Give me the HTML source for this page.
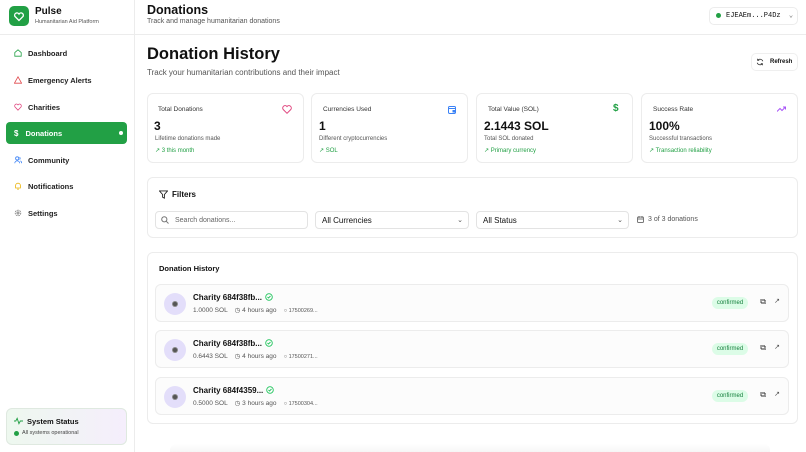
<!DOCTYPE html>
<html><head><meta charset="utf-8"><style>
*{box-sizing:border-box;margin:0;padding:0}
body{width:806px;height:452px;overflow:hidden;font-family:"Liberation Sans",sans-serif;background:#fff;color:#111;position:relative}
.abs{position:absolute}
.side{left:0;top:0;width:135px;height:452px;border-right:1px solid #ececec;background:#fff}
.logo{left:9px;top:6px;width:20px;height:20px;background:#22a045;border-radius:5px}
.nav{left:6px;width:121px;height:22px;font-size:7.5px;font-weight:bold;color:#222;display:flex;align-items:center;padding-left:8px;border-radius:4px}
.nav svg{margin-right:6px}
.card{border:1px solid #ececec;border-radius:6px;background:#fff}
.sm{font-size:6px;color:#555}
.gr{font-size:6px;color:#22a045}
.row{left:155px;width:634px;height:38px;border:1px solid #ececec;border-radius:6px;background:#fcfcfc}
.av{left:8px;top:8px;width:22px;height:22px;border-radius:50%;background:#e3defa}
.av:after{content:"";position:absolute;left:9px;top:9px;width:4px;height:4px;border-radius:50%;background:#555;box-shadow:0 0 0 1px #888}
.badge{right:40px;top:12px;width:36px;height:12px;border-radius:6px;background:#dcfce7;color:#15803d;font-size:6px;text-align:center;line-height:12px}
.sel{border:1px solid #e3e3e3;border-radius:4px;height:18px;font-size:8px;padding-left:6px;line-height:17px;background:#fff}
.ck{display:inline-block;vertical-align:-1px;margin-left:3px}
</style></head><body>
<div class="abs side"></div>
<div class="abs" style="left:0;top:34px;width:806px;border-top:1px solid #ececec"></div>
<div class="abs logo"><svg width="20" height="20" viewBox="0 0 20 20"><path d="M10 14.5l-4-4a2.3 2.3 0 0 1 4-2.5a2.3 2.3 0 0 1 4 2.5z" fill="none" stroke="#fff" stroke-width="1.3"/></svg></div>
<div class="abs" style="left:35px;top:6px;font-size:10px;font-weight:bold">Pulse</div>
<div class="abs" style="left:35px;top:19px;font-size:5.5px;color:#555">Humanitarian Aid Platform</div>

<div class="abs nav" style="top:42px"><svg width="8" height="8" viewBox="0 0 10 10"><path d="M1 4.5L5 1l4 3.5V9H1z" fill="none" stroke="#22a045" stroke-width="1"/></svg>Dashboard</div>
<div class="abs nav" style="top:69px"><svg width="8" height="8" viewBox="0 0 10 10"><path d="M5 1L9.5 9H.5z" fill="none" stroke="#e0474b" stroke-width="1"/></svg>Emergency Alerts</div>
<div class="abs nav" style="top:96px"><svg width="8" height="8" viewBox="0 0 10 10"><path d="M5 9L1.3 5A2.2 2.2 0 0 1 5 2.3A2.2 2.2 0 0 1 8.7 5z" fill="none" stroke="#e0477f" stroke-width="1"/></svg>Charities</div>
<div class="abs nav" style="top:122px;background:#22a045;color:#fff"><span style="margin-right:7px;font-size:8px">$</span>Donations<span class="abs" style="right:4px;top:9px;width:4px;height:4px;border-radius:50%;background:#fff"></span></div>
<div class="abs nav" style="top:149px"><svg width="8" height="8" viewBox="0 0 10 10"><circle cx="4" cy="3" r="2" fill="none" stroke="#3b82f6"/><path d="M1 9a3 3 0 0 1 6 0M7 1.5a2 2 0 0 1 0 3M8 6a3 3 0 0 1 1.5 3" fill="none" stroke="#3b82f6"/></svg>Community</div>
<div class="abs nav" style="top:175px"><svg width="8" height="8" viewBox="0 0 10 10"><path d="M2 7.5V4.5a3 3 0 0 1 6 0v3zM4 9h2" fill="none" stroke="#eab308"/></svg>Notifications</div>
<div class="abs nav" style="top:202px"><svg width="8" height="8" viewBox="0 0 10 10"><circle cx="5" cy="5" r="3.5" fill="none" stroke="#777" stroke-dasharray="2 1"/><circle cx="5" cy="5" r="1.3" fill="none" stroke="#777"/></svg>Settings</div>

<div class="abs" style="left:6px;top:408px;width:121px;height:37px;border:1px solid #dfe9e0;border-radius:6px;background:linear-gradient(90deg,#eef8ef,#f5eefc)"></div>
<svg class="abs" style="left:14px;top:417px" width="9" height="8" viewBox="0 0 10 8"><path d="M0 4h2l1.5-3 2 6 1.5-3H10" fill="none" stroke="#22a045"/></svg>
<div class="abs" style="left:27px;top:417px;font-size:7.5px;font-weight:bold">System Status</div>
<div class="abs" style="left:14px;top:431px;width:5px;height:5px;border-radius:50%;background:#22a045"></div>
<div class="abs" style="left:22px;top:430px;font-size:5.5px;color:#444">All systems operational</div>

<div class="abs" style="left:147px;top:3px;font-size:12.5px;font-weight:bold">Donations</div>
<div class="abs" style="left:147px;top:18px;font-size:7px;color:#555">Track and manage humanitarian donations</div>
<div class="abs" style="left:709px;top:7px;width:89px;height:18px;border:1px solid #ececec;border-radius:5px;font-family:'Liberation Mono',monospace;font-size:7px;line-height:16px;padding-left:16px">EJEAEm...P4Dz <span style="margin-left:4px;color:#666">⌄</span></div>
<div class="abs" style="left:716px;top:13px;width:5px;height:5px;border-radius:50%;background:#22a045"></div>

<div class="abs" style="left:147px;top:45px;font-size:16.5px;font-weight:bold">Donation History</div>
<div class="abs" style="left:147px;top:68px;font-size:8px;color:#555">Track your humanitarian contributions and their impact</div>
<div class="abs" style="left:751px;top:53px;width:47px;height:18px;border:1px solid #efefef;border-radius:5px"></div>
<div class="abs" style="left:770px;top:59px;font-size:6px;font-weight:bold">Refresh</div>
<svg class="abs" style="left:756px;top:58px" width="8" height="8" viewBox="0 0 10 10"><path d="M8.5 4A3.7 3.7 0 0 0 2 3M1.5 6A3.7 3.7 0 0 0 8 7M2 1v2h2M8 9V7H6" fill="none" stroke="#333"/></svg>

<div class="abs card" style="left:147px;top:93px;width:157px;height:70px"></div>
<div class="abs card" style="left:311px;top:93px;width:157px;height:70px"></div>
<div class="abs card" style="left:476px;top:93px;width:157px;height:70px"></div>
<div class="abs card" style="left:641px;top:93px;width:157px;height:70px"></div>
<div class="abs" style="left:158px;top:106px;font-size:6.5px;color:#333">Total Donations</div>
<div class="abs" style="left:154px;top:119px;font-size:12px;font-weight:bold">3</div>
<div class="abs sm" style="left:155px;top:136px">Lifetime donations made</div>
<div class="abs gr" style="left:155px;top:147px">↗ 3 this month</div>
<svg class="abs" style="left:282px;top:105px" width="10" height="9" viewBox="0 0 10 9"><path d="M5 8.3L1.2 4.5A2.2 2.2 0 0 1 5 1.6A2.2 2.2 0 0 1 8.8 4.5z" fill="none" stroke="#e0477f"/></svg>

<div class="abs" style="left:323px;top:106px;font-size:6.5px;color:#333">Currencies Used</div>
<div class="abs" style="left:319px;top:119px;font-size:12px;font-weight:bold">1</div>
<div class="abs sm" style="left:319px;top:136px">Different cryptocurrencies</div>
<div class="abs gr" style="left:319px;top:147px">↗ SOL</div>
<svg class="abs" style="left:448px;top:106px" width="8" height="8" viewBox="0 0 8 8"><rect x=".5" y=".5" width="7" height="7" rx="1.2" fill="none" stroke="#3b82f6"/><path d="M.5 2.5h7M5 4.5h2.5v1.5H5z" stroke="#3b82f6" fill="#3b82f6"/></svg>

<div class="abs" style="left:488px;top:106px;font-size:6.5px;color:#333">Total Value (SOL)</div>
<div class="abs" style="left:484px;top:119px;font-size:12px;font-weight:bold">2.1443 SOL</div>
<div class="abs sm" style="left:484px;top:136px">Total SOL donated</div>
<div class="abs gr" style="left:484px;top:147px">↗ Primary currency</div>
<div class="abs" style="left:613px;top:103px;font-size:10px;color:#22a045;font-weight:bold">$</div>

<div class="abs" style="left:653px;top:106px;font-size:6.5px;color:#333">Success Rate</div>
<div class="abs" style="left:649px;top:119px;font-size:12px;font-weight:bold">100%</div>
<div class="abs sm" style="left:649px;top:136px">Successful transactions</div>
<div class="abs gr" style="left:649px;top:147px">↗ Transaction reliability</div>
<svg class="abs" style="left:777px;top:106px" width="9" height="6" viewBox="0 0 9 6"><path d="M0 5.5l3-3 2 2 3.5-3.5M6 1h2.5v2.5" fill="none" stroke="#a855f7"/></svg>

<div class="abs card" style="left:147px;top:177px;width:651px;height:61px"></div>
<svg class="abs" style="left:159px;top:190px" width="9" height="9" viewBox="0 0 10 10"><path d="M.5 1h9L6 5v4L4 8V5z" fill="none" stroke="#222"/></svg>
<div class="abs" style="left:172px;top:190px;font-size:8px;font-weight:bold">Filters</div>
<div class="abs sel" style="left:155px;top:211px;width:153px;color:#666;font-size:7px;padding-left:19px">Search donations...</div>
<svg class="abs" style="left:161px;top:216px" width="8" height="8" viewBox="0 0 8 8"><circle cx="3.3" cy="3.3" r="2.6" fill="none" stroke="#777"/><path d="M5.3 5.3L7.5 7.5" stroke="#777"/></svg>
<div class="abs sel" style="left:315px;top:211px;width:154px">All Currencies<span class="abs" style="right:5px;top:0;font-size:7px;color:#555">⌄</span></div>
<div class="abs sel" style="left:476px;top:211px;width:153px">All Status<span class="abs" style="right:5px;top:0;font-size:7px;color:#555">⌄</span></div>
<svg class="abs" style="left:637px;top:216px" width="7" height="7" viewBox="0 0 7 7"><rect x=".5" y="1" width="6" height="5.5" rx="1" fill="none" stroke="#777"/><path d="M.5 3h6M2 0v2M5 0v2" stroke="#777"/></svg>
<div class="abs" style="left:648px;top:216px;font-size:7px;color:#555">3 of 3 donations</div>

<div class="abs card" style="left:147px;top:252px;width:651px;height:172px"></div>
<div class="abs" style="left:159px;top:264px;font-size:7.5px;font-weight:bold">Donation History</div>

<div class="abs row" style="top:284px"><div class="abs av"></div>
<div class="abs" style="left:37px;top:8px;font-size:8px;font-weight:bold">Charity 684f38fb...<svg class="ck" width="8" height="8" viewBox="0 0 8 8"><circle cx="4" cy="4" r="3.3" fill="none" stroke="#22c55e" stroke-width=".9"/><path d="M2.5 4l1 1 2-2" fill="none" stroke="#22c55e" stroke-width=".9"/></svg></div>
<div class="abs" style="left:37px;top:21px;font-size:6.5px;color:#555">1.0000 SOL &nbsp;&nbsp; ◷ 4 hours ago &nbsp;&nbsp; <span style="font-size:5.5px">○ 17500269...</span></div>
<div class="abs badge">confirmed</div><div class="abs" style="right:22px;top:12px;font-size:8px;color:#333">⧉</div><div class="abs" style="right:8px;top:12px;font-size:7px;color:#555">↗</div></div>

<div class="abs row" style="top:330px"><div class="abs av"></div>
<div class="abs" style="left:37px;top:8px;font-size:8px;font-weight:bold">Charity 684f38fb...<svg class="ck" width="8" height="8" viewBox="0 0 8 8"><circle cx="4" cy="4" r="3.3" fill="none" stroke="#22c55e" stroke-width=".9"/><path d="M2.5 4l1 1 2-2" fill="none" stroke="#22c55e" stroke-width=".9"/></svg></div>
<div class="abs" style="left:37px;top:21px;font-size:6.5px;color:#555">0.6443 SOL &nbsp;&nbsp; ◷ 4 hours ago &nbsp;&nbsp; <span style="font-size:5.5px">○ 17500271...</span></div>
<div class="abs badge">confirmed</div><div class="abs" style="right:22px;top:12px;font-size:8px;color:#333">⧉</div><div class="abs" style="right:8px;top:12px;font-size:7px;color:#555">↗</div></div>

<div class="abs row" style="top:377px"><div class="abs av"></div>
<div class="abs" style="left:37px;top:8px;font-size:8px;font-weight:bold">Charity 684f4359...<svg class="ck" width="8" height="8" viewBox="0 0 8 8"><circle cx="4" cy="4" r="3.3" fill="none" stroke="#22c55e" stroke-width=".9"/><path d="M2.5 4l1 1 2-2" fill="none" stroke="#22c55e" stroke-width=".9"/></svg></div>
<div class="abs" style="left:37px;top:21px;font-size:6.5px;color:#555">0.5000 SOL &nbsp;&nbsp; ◷ 3 hours ago &nbsp;&nbsp; <span style="font-size:5.5px">○ 17500304...</span></div>
<div class="abs badge">confirmed</div><div class="abs" style="right:22px;top:12px;font-size:8px;color:#333">⧉</div><div class="abs" style="right:8px;top:12px;font-size:7px;color:#555">↗</div></div>

<div class="abs" style="left:170px;top:444px;width:600px;height:8px;background:linear-gradient(180deg,#fff,#f6f6f6);border-radius:6px 6px 0 0"></div>
</body></html>
